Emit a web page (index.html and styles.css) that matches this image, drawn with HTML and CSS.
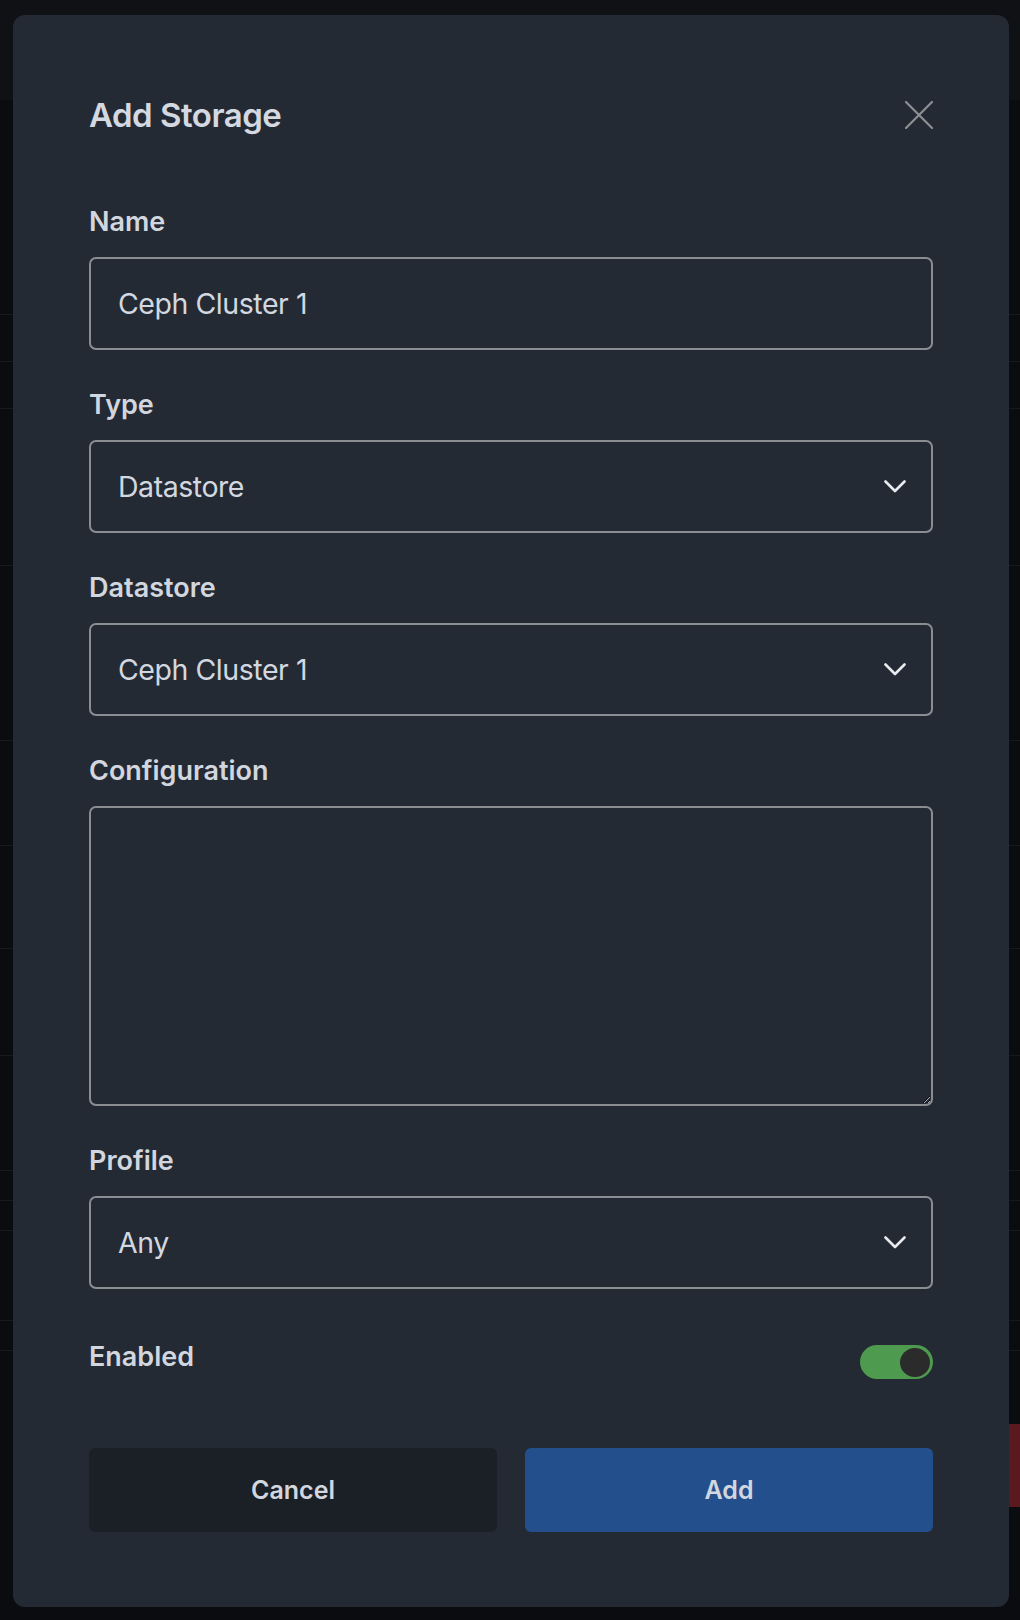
FILE: index.html
```html
<!DOCTYPE html>
<html lang="en">
<head>
<meta charset="utf-8">
<title>Add Storage</title>
<link rel="stylesheet" href="styles.css">
</head>
<body>
<div class="backdrop">
  <div class="bg-row h215"></div>
  <div class="bg-row h47"></div>
  <div class="bg-row h47"></div>
  <div class="bg-row h157"></div>
  <div class="bg-row h175"></div>
  <div class="bg-row h105"></div>
  <div class="bg-row h103"></div>
  <div class="bg-row h107"></div>
  <div class="bg-row h115"></div>
  <div class="bg-row h30"></div>
  <div class="bg-row h30"></div>
  <div class="bg-row h90"></div>
  <div class="bg-row h30"></div>
  <div class="bg-danger"></div>
</div>
<div class="modal" role="dialog" aria-labelledby="dlg-title">
  <div class="modal-header">
    <h2 class="modal-title" id="dlg-title">Add Storage</h2>
    <button class="close-btn" aria-label="Close">
      <svg width="28" height="28" viewBox="0 0 28 28"><path d="M1 1 L27 27 M27 1 L1 27" stroke="#8c8f94" stroke-width="2.2" stroke-linecap="round" fill="none"/></svg>
    </button>
  </div>

  <div class="field">
    <label class="label">Name</label>
    <div class="control"><span class="value">Ceph Cluster 1</span></div>
  </div>

  <div class="field">
    <label class="label">Type</label>
    <div class="control select"><span class="value">Datastore</span>
      <svg class="chev" width="22" height="13" viewBox="0 0 22 13"><path d="M1.5 1.5 L11 11 L20.5 1.5" stroke="#e8eaed" stroke-width="2.6" stroke-linecap="round" stroke-linejoin="round" fill="none"/></svg>
    </div>
  </div>

  <div class="field">
    <label class="label">Datastore</label>
    <div class="control select"><span class="value">Ceph Cluster 1</span>
      <svg class="chev" width="22" height="13" viewBox="0 0 22 13"><path d="M1.5 1.5 L11 11 L20.5 1.5" stroke="#e8eaed" stroke-width="2.6" stroke-linecap="round" stroke-linejoin="round" fill="none"/></svg>
    </div>
  </div>

  <div class="field">
    <label class="label">Configuration</label>
    <textarea class="textarea"></textarea>
  </div>

  <div class="field">
    <label class="label">Profile</label>
    <div class="control select"><span class="value">Any</span>
      <svg class="chev" width="22" height="13" viewBox="0 0 22 13"><path d="M1.5 1.5 L11 11 L20.5 1.5" stroke="#e8eaed" stroke-width="2.6" stroke-linecap="round" stroke-linejoin="round" fill="none"/></svg>
    </div>
  </div>

  <div class="toggle-row">
    <span class="label">Enabled</span>
    <span class="toggle"><span class="knob"></span></span>
  </div>

  <div class="actions">
    <button class="btn btn-cancel">Cancel</button>
    <button class="btn btn-add">Add</button>
  </div>
</div>
</body>
</html>
```

FILE: styles.css
```css
* { box-sizing: border-box; }
html, body { margin: 0; padding: 0; }
body {
  width: 1020px;
  height: 1620px;
  background: #08090b;
  font-family: Inter, "Noto Sans", "Liberation Sans", sans-serif;
  overflow: hidden;
}
.backdrop {
  display: flex;
  flex-direction: column;
  padding-top: 100px;
  background: linear-gradient(#0f1114 0, #0f1114 100px, #0a0c0f 100px);
  height: 1620px;
}
.bg-row {
  border-bottom: 1px solid #16191d;
}
.h215 { height: 215px; }
.h47 { height: 47px; }
.h157 { height: 157px; }
.h175 { height: 175px; }
.h105 { height: 105px; }
.h103 { height: 103px; }
.h107 { height: 107px; }
.h115 { height: 115px; }
.h30 { height: 30px; }
.h90 { height: 90px; }
.bg-danger {
  height: 83px;
  width: 12px;
  margin-left: auto;
  margin-top: 73px;
  background: #5a191d;
}
.modal {
  position: fixed;
  top: 15px;
  left: 13px;
  width: 996px;
  height: 1592px;
  background: #242a33;
  border-radius: 12px;
  padding: 83px 76px 0 76px;
  display: flex;
  flex-direction: column;
  color: #d2d7df;
}
.modal-header {
  display: flex;
  align-items: center;
  justify-content: space-between;
  height: 34px;
  margin-bottom: 76px;
}
.modal-title {
  margin: 0;
  font-size: 33px;
  line-height: 34px;
  font-weight: 600;
  color: #d4d9e1;
  letter-spacing: -0.5px;
}
.close-btn {
  background: none;
  border: 0;
  padding: 0;
  width: 28px;
  height: 28px;
  display: flex;
}
.field {
  display: flex;
  flex-direction: column;
  margin-bottom: 41px;
}
.label {
  font-size: 27px;
  line-height: 27px;
  font-weight: 600;
  color: #d2d7df;
  margin-bottom: 22px;
}
.control {
  height: 93px;
  border: 2px solid #8a8e93;
  border-radius: 7px;
  display: flex;
  align-items: center;
  justify-content: space-between;
  padding: 0 25px 0 27px;
}
.value {
  font-size: 28.5px;
  letter-spacing: -0.45px;
  color: #d3d8e0;
}
.textarea {
  height: 300px;
  border: 2px solid #8a8e93;
  border-radius: 7px;
  background: transparent;
  resize: both;
  color: #d3d8e0;
  font-family: inherit;
  font-size: 28px;
  display: block;
  width: 100%;
}
.toggle-row {
  display: flex;
  justify-content: space-between;
  align-items: flex-start;
  margin-top: 13px;
}
.toggle-row .label { margin: 0; }
.toggle {
  margin-top: 2px;
  width: 73px;
  height: 34px;
  border-radius: 17px;
  background: #4e9a4f;
  display: flex;
  justify-content: flex-end;
  align-items: center;
  padding: 0 3px;
}
.knob {
  width: 30px;
  height: 29px;
  border-radius: 50%;
  background: #2b2b2c;
}
.actions {
  display: flex;
  gap: 28px;
  margin-top: 69px;
}
.btn {
  flex: 1;
  height: 84px;
  border: 0;
  border-radius: 6px;
  font-family: inherit;
  font-size: 25px;
  font-weight: 600;
  color: #d2d7df;
}
.btn-cancel { background: #1b1f26; }
.btn-add { background: #23508d; }
```
